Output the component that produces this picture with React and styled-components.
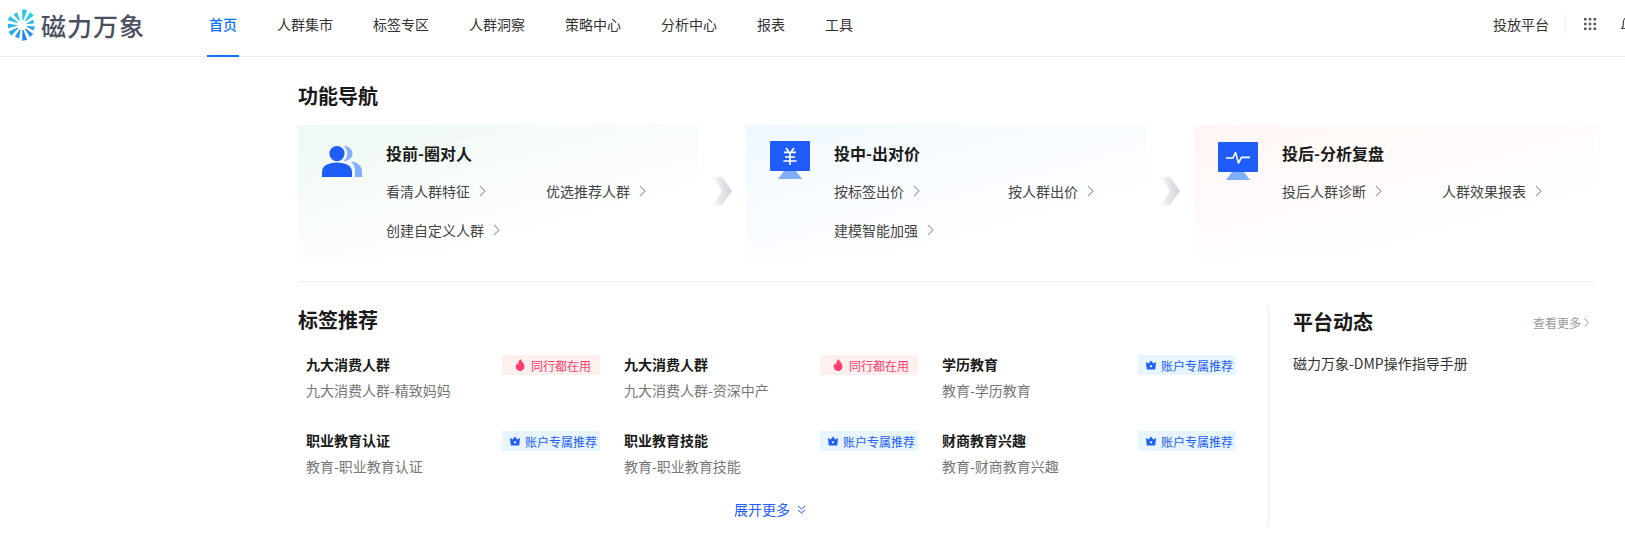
import React from 'react'
import styled, { createGlobalStyle } from 'styled-components'

const GlobalStyle = createGlobalStyle`
  html, body {
    margin: 0;
    padding: 0;
    background: #fff;
    overflow: hidden;
  }
  body {
    font-family: "Noto Sans CJK SC", "Noto Sans", sans-serif;
    color: #333;
  }
`

const navItems = ['首页', '人群集市', '标签专区', '人群洞察', '策略中心', '分析中心', '报表', '工具']

const guideCards = [
  {
    title: '投前-圈对人',
    icon: 'people',
    iconTop: 21,
    tint: '#eff9f3',
    colWidth: 160,
    links: ['看清人群特征', '优选推荐人群', '创建自定义人群'],
  },
  {
    title: '投中-出对价',
    icon: 'price',
    iconTop: 16,
    tint: '#f0f8ff',
    colWidth: 174,
    links: ['按标签出价', '按人群出价', '建模智能加强'],
  },
  {
    title: '投后-分析复盘',
    icon: 'pulse',
    iconTop: 17,
    tint: '#fff6f4',
    colWidth: 160,
    links: ['投后人群诊断', '人群效果报表'],
  },
]

const tagItems = [
  { title: '九大消费人群', sub: '九大消费人群-精致妈妈', hot: true },
  { title: '九大消费人群', sub: '九大消费人群-资深中产', hot: true },
  { title: '学历教育', sub: '教育-学历教育' },
  { title: '职业教育认证', sub: '教育-职业教育认证' },
  { title: '职业教育技能', sub: '教育-职业教育技能' },
  { title: '财商教育兴趣', sub: '教育-财商教育兴趣' },
]

// spokes of the logo, angle in degrees clockwise from top
const spokes = [
  { a: 10, len: 15, color: '#27c7e6' },
  { a: 42, len: 14, color: '#22d0e4' },
  { a: 74, len: 10, color: '#2bb6ee' },
  { a: 106, len: 11, color: '#2aa4f0' },
  { a: 138, len: 13, color: '#1f8ff0' },
  { a: 170, len: 15, color: '#1d86ee' },
  { a: 202, len: 12, color: '#2095f2' },
  { a: 234, len: 14, color: '#25a8f2' },
  { a: 266, len: 13, color: '#29b6f0' },
  { a: 298, len: 14, color: '#2cc0ee' },
  { a: 330, len: 12, color: '#2dc6ea' },
]

const spokePoints = ({ a, len }) => {
  const cx = 14
  const cy = 16
  const inner = 5
  const outer = inner + len * 0.72
  const spread = 9
  const pt = (deg, r) => {
    const t = (deg * Math.PI) / 180
    return `${(cx + Math.sin(t) * r).toFixed(2)},${(cy - Math.cos(t) * r).toFixed(2)}`
  }
  return [pt(a - spread * 0.6, inner), pt(a + spread * 0.6, inner), pt(a + spread, outer), pt(a - spread, outer)].join(' ')
}

const LogoMark = () => (
  <svg width="28" height="32" viewBox="0 0 28 32">
    {spokes.map((s) => (
      <polygon key={s.a} points={spokePoints(s)} fill={s.color} />
    ))}
  </svg>
)

const PeopleIcon = () => (
  <svg width="40" height="31" viewBox="0 0 40 31">
    <path d="M21.5 0C26.5 0 30.5 3.4 30.5 7.6C30.5 11.8 26.5 15.2 21.5 15.2C24 13.2 25.3 10.6 25.3 7.6C25.3 4.6 24 2 21.5 0Z" fill="#82aeff" />
    <path d="M29 15.6C35.5 16.2 40 20 40 25.6V31H33V25C33 21.2 31.6 18 29 15.6Z" fill="#82aeff" />
    <circle cx="15" cy="7.6" r="7.6" fill="#1f5cfa" />
    <path d="M0 31V26C0 20 6 16.6 15 16.6C24 16.6 30 20 30 26V31Z" fill="#1f5cfa" />
  </svg>
)

const MonitorIcon = ({ kind }) => (
  <svg width="40" height="38" viewBox="0 0 40 38">
    <path d="M8 38L14 30H26L32 38Z" fill="#82aeff" />
    <rect x="0" y="0" width="40" height="30" rx="1" fill="#1f5cfa" />
    {kind === 'price' ? (
      <path d="M16 7L18.6 10.6M24 7L21.4 10.6M14 11.4H26M15 16H25M13.4 20H26.6M20 10.6V24" stroke="#fff" strokeWidth="1.7" fill="none" />
    ) : (
      <path d="M8 16H15L17.5 10.5L20.5 21L23.5 15.4H32" stroke="#fff" strokeWidth="1.6" fill="none" strokeLinejoin="round" />
    )}
  </svg>
)

const Chevron = () => (
  <svg width="7" height="12" viewBox="0 0 7 12">
    <path d="M1 1L6 6L1 11" stroke="#a3a6ad" strokeWidth="1.1" fill="none" />
  </svg>
)

const StepArrow = () => (
  <svg width="20" height="28" viewBox="0 0 20 28">
    <defs>
      <linearGradient id="stepFade" x1="0" y1="0" x2="1" y2="0">
        <stop offset="0" stopColor="#f6f7f8" />
        <stop offset="1" stopColor="#cfd2d7" />
      </linearGradient>
    </defs>
    <path d="M0 0H9L19 14L9 28H0L9 14Z" fill="url(#stepFade)" />
  </svg>
)

const Flame = () => (
  <svg width="10" height="12" viewBox="0 0 10 12">
    <path d="M5.6 0C5.8 2.2 9.2 3.6 9.4 7.4C9.5 10 7.6 12 5 12C2.4 12 0.6 10 0.7 7.6C0.8 6.2 1.4 5 2.3 4.2C2.4 5 2.7 5.5 3.2 5.8C3.1 3.6 3.9 1.4 5.6 0Z" fill="#ff3d6b" />
  </svg>
)

const Crown = () => (
  <svg width="10" height="10" viewBox="0 0 10 10">
    <path d="M0 2L2.7 3.6L5 0.4L7.3 3.6L10 2L9.2 9.6H0.8Z" fill="#1f5cfa" />
    <rect x="3.9" y="5.4" width="2.2" height="1.8" fill="#fff" />
  </svg>
)

const App = () => {
  return (
    <Page>
      <GlobalStyle />
      <Header>
        <Logo>
          <LogoMark />
          <LogoText>磁力万象</LogoText>
        </Logo>
        <Nav>
          {navItems.map((item, i) => (
            <NavItem key={item} $active={i === 0}>{item}</NavItem>
          ))}
        </Nav>
        <HeaderRight>
          <PlatformLink>投放平台</PlatformLink>
          <HeaderDivider />
          <svg width="12" height="12" viewBox="0 0 12 12">
            {[0, 1, 2].flatMap((r) =>
              [0, 1, 2].map((c) => (
                <rect key={`${r}${c}`} x={c * 4.75} y={r * 4.75} width="2.5" height="2.5" fill="#555" />
              ))
            )}
          </svg>
          <BellWrap>
            <svg width="16" height="16" viewBox="0 0 16 16">
              <path d="M2 12.5C3 11.5 3.3 10.5 3.3 8V6.4C3.3 3.6 5.4 1.5 8 1.5C10.6 1.5 12.7 3.6 12.7 6.4V8C12.7 10.5 13 11.5 14 12.5ZM6.5 14.5H9.5" stroke="#444" strokeWidth="1.2" fill="none" />
            </svg>
          </BellWrap>
        </HeaderRight>
      </Header>

      <Main>
        <SectionTitle>功能导航</SectionTitle>
        <CardRow>
          {guideCards.map((card, i) => (
            <React.Fragment key={card.title}>
              {i > 0 && <ArrowSlot><StepArrow /></ArrowSlot>}
              <GuideCard $tint={card.tint}>
                <IconSlot $top={card.iconTop}>
                  {card.icon === 'people' ? <PeopleIcon /> : <MonitorIcon kind={card.icon} />}
                </IconSlot>
                <CardBody>
                  <CardTitle>{card.title}</CardTitle>
                  <CardLinks $col={card.colWidth}>
                    {card.links.map((link) => (
                      <CardLink key={link}>{link}<Chevron /></CardLink>
                    ))}
                  </CardLinks>
                </CardBody>
              </GuideCard>
            </React.Fragment>
          ))}
        </CardRow>
        <Rule />
        <Lower>
          <TagSection>
            <SectionTitle>标签推荐</SectionTitle>
            <TagGrid>
              {tagItems.map((item) => (
                <TagItem key={item.sub}>
                  <TagHead>
                    <TagTitle>{item.title}</TagTitle>
                    {item.hot ? (
                      <Badge $hot><Flame />同行都在用</Badge>
                    ) : (
                      <Badge><Crown />账户专属推荐</Badge>
                    )}
                  </TagHead>
                  <TagSub>{item.sub}</TagSub>
                </TagItem>
              ))}
            </TagGrid>
            <ExpandMore>
              展开更多
              <svg width="9" height="9" viewBox="0 0 9 9">
                <path d="M1 1L4.5 4L8 1M1 5L4.5 8L8 5" stroke="#1f5cfa" strokeWidth="1" fill="none" />
              </svg>
            </ExpandMore>
          </TagSection>
          <NewsSection>
            <NewsHead>
              <SectionTitle>平台动态</SectionTitle>
              <MoreLink>
                查看更多
                <svg width="5" height="9" viewBox="0 0 5 9">
                  <path d="M0.5 0.5L4.5 4.5L0.5 8.5" stroke="#999" strokeWidth="0.9" fill="none" />
                </svg>
              </MoreLink>
            </NewsHead>
            <NewsLink>磁力万象-DMP操作指导手册</NewsLink>
          </NewsSection>
        </Lower>
      </Main>
    </Page>
  )
}

const Page = styled.div`
  width: 1640px;
`

const Header = styled.header`
  display: flex;
  align-items: flex-start;
  height: 56px;
  padding: 0 4px 0 8px;
  border-bottom: 1px solid #eeeff1;
`

const Logo = styled.div`
  display: flex;
  align-items: center;
  gap: 5px;
  height: 50px;
  width: 197px;
`

const LogoText = styled.div`
  font-size: 25px;
  line-height: 32px;
  font-weight: 500;
  letter-spacing: 1px;
  color: #4b4f60;
`

const Nav = styled.nav`
  display: flex;
  gap: 40px;
  margin-left: 4px;
`

const NavItem = styled.div`
  position: relative;
  height: 50px;
  line-height: 48px;
  font-size: 14px;
  font-weight: ${(p) => (p.$active ? 500 : 400)};
  color: ${(p) => (p.$active ? '#0f6fff' : '#333')};

  &::after {
    content: "";
    display: ${(p) => (p.$active ? 'block' : 'none')};
    position: absolute;
    top: 55px;
    left: -2px;
    right: -2px;
    height: 2px;
    background: #0f6fff;
  }
`

const HeaderRight = styled.div`
  display: flex;
  align-items: center;
  height: 48px;
  margin-left: auto;
`

const PlatformLink = styled.div`
  font-size: 14px;
  color: #333;
`

const HeaderDivider = styled.div`
  width: 1px;
  height: 20px;
  margin: 0 18px 0 16px;
  background: #eeeff1;
`

const BellWrap = styled.div`
  display: flex;
  margin-left: 24px;
`

const Main = styled.main`
  width: 1296px;
  padding: 25px 0 0 298px;
`

const SectionTitle = styled.h2`
  margin: 0;
  font-size: 20px;
  line-height: 28px;
  font-weight: 700;
  color: #1a1a1a;
`

const CardRow = styled.div`
  display: flex;
  margin-top: 15px;
`

const ArrowSlot = styled.div`
  display: flex;
  align-items: center;
  justify-content: center;
  box-sizing: border-box;
  width: 48px;
  padding-left: 2px;
`

const GuideCard = styled.div`
  display: flex;
  gap: 24px;
  box-sizing: border-box;
  width: 400px;
  height: 132px;
  padding-left: 24px;
  background: linear-gradient(165deg, ${(p) => p.$tint} 0%, #ffffff 75%);
`

const IconSlot = styled.div`
  width: 40px;
  margin-top: ${(p) => p.$top}px;
`

const CardBody = styled.div`
  padding-top: 16px;
`

const CardTitle = styled.div`
  font-size: 16px;
  line-height: 24px;
  font-weight: 700;
  color: #1a1a1a;
`

const CardLinks = styled.div`
  display: grid;
  grid-template-columns: ${(p) => p.$col}px auto;
  justify-content: start;
  row-gap: 19px;
  margin-top: 16px;
`

const CardLink = styled.div`
  display: flex;
  align-items: center;
  gap: 9px;
  font-size: 14px;
  line-height: 20px;
  color: #444;
`

const Rule = styled.div`
  height: 1px;
  margin-top: 24px;
  background: #eeeff1;
`

const Lower = styled.div`
  display: flex;
  margin-top: 24px;
`

const TagSection = styled.section`
  box-sizing: border-box;
  width: 970px;
  height: 220px;
`

const TagGrid = styled.div`
  display: grid;
  grid-template-columns: repeat(3, 294px);
  column-gap: 24px;
  row-gap: 30px;
  margin-top: 21px;
  padding-left: 8px;
`

const TagItem = styled.div`
  display: flex;
  flex-direction: column;
  gap: 5px;
`

const TagHead = styled.div`
  display: flex;
  justify-content: space-between;
  align-items: center;
`

const TagTitle = styled.div`
  padding-bottom: 2px;
  font-size: 14px;
  line-height: 18px;
  font-weight: 700;
  color: #1a1a1a;
`

const TagSub = styled.div`
  padding-bottom: 1px;
  font-size: 14px;
  line-height: 20px;
  color: #777;
`

const Badge = styled.div`
  display: flex;
  align-items: center;
  justify-content: flex-end;
  box-sizing: border-box;
  width: 98px;
  height: 20px;
  gap: ${(p) => (p.$hot ? 6 : 5)}px;
  padding-right: ${(p) => (p.$hot ? 9 : 3)}px;
  font-size: 12px;
  color: ${(p) => (p.$hot ? '#ff3d6b' : '#1f5cfa')};
  background: ${(p) => (p.$hot ? '#fff0f0' : '#e6f5ff')};
`

const ExpandMore = styled.div`
  display: flex;
  justify-content: center;
  align-items: center;
  gap: 7px;
  width: 944px;
  margin-top: 22px;
  font-size: 14px;
  line-height: 20px;
  color: #1f5cfa;
`

const NewsSection = styled.section`
  box-sizing: border-box;
  width: 321px;
  height: 220px;
  padding: 2px 0 0 24px;
  border-left: 1px solid #eeeff1;
`

const NewsHead = styled.div`
  display: flex;
  justify-content: space-between;
  align-items: center;
`

const MoreLink = styled.div`
  display: flex;
  align-items: center;
  gap: 3px;
  font-size: 12px;
  color: #999;
`

const NewsLink = styled.div`
  margin-top: 17px;
  font-size: 14px;
  line-height: 20px;
  color: #333;
`

export default App
